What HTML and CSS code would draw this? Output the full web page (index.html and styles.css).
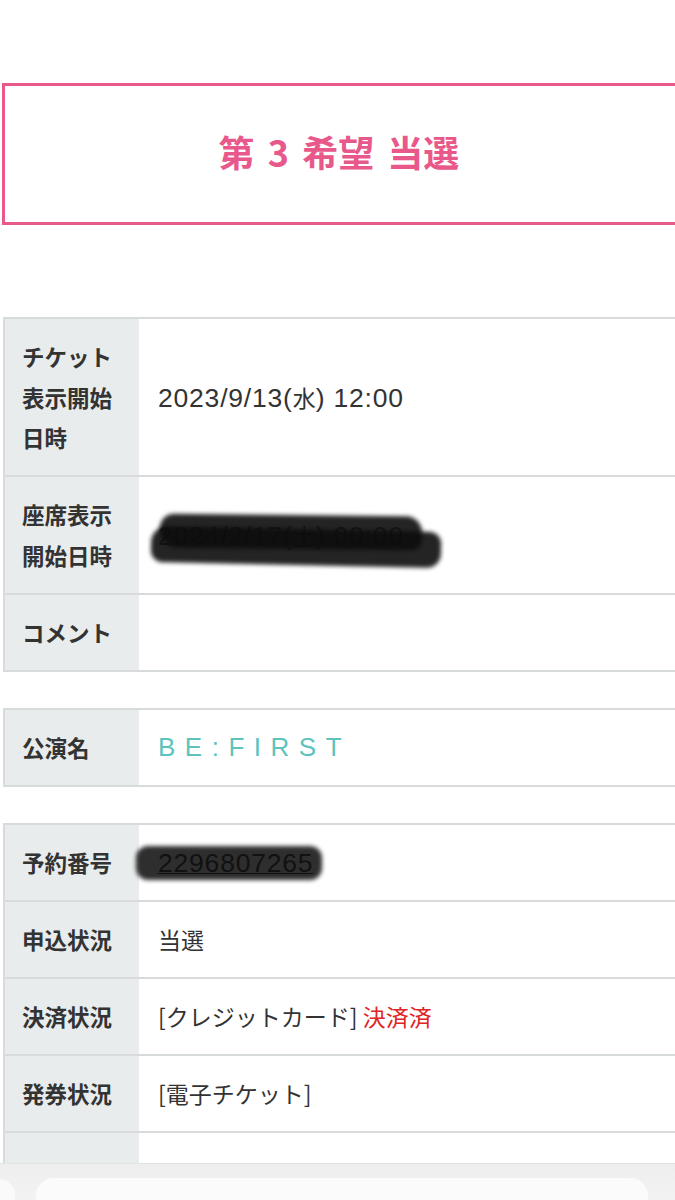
FILE: index.html
```html
<!DOCTYPE html>
<html lang="ja">
<head>
<meta charset="utf-8">
<title>当選</title>
<link rel="stylesheet" href="styles.css">
</head>
<body>
<div class="page">
  <div class="result"><span>第 3 希望 当選</span></div>

  <table class="info first">
    <tr>
      <th>チケット<br>表示開始<br>日時</th>
      <td><span class="lat">2023/9/13(</span>水<span class="lat">) 12:00</span></td>
    </tr>
    <tr>
      <th>座席表示<br>開始日時</th>
      <td><span class="redact seat"><span class="lat">2024/2/17(</span>土<span class="lat">) 00:00</span><i class="blob b1"></i><i class="blob b2"></i></span></td>
    </tr>
    <tr>
      <th>コメント</th>
      <td></td>
    </tr>
  </table>

  <table class="info">
    <tr>
      <th>公演名</th>
      <td class="artist">BE:FIRST</td>
    </tr>
  </table>

  <table class="info">
    <tr>
      <th>予約番号</th>
      <td><span class="redact"><u class="lat">2296807265</u><i class="blob b3"></i></span></td>
    </tr>
    <tr>
      <th>申込状況</th>
      <td>当選</td>
    </tr>
    <tr>
      <th>決済状況</th>
      <td>[クレジットカード] <span class="paid">決済済</span></td>
    </tr>
    <tr>
      <th>発券状況</th>
      <td>[電子チケット]</td>
    </tr>
    <tr>
      <th>&nbsp;</th>
      <td>&nbsp;</td>
    </tr>
  </table>
</div>

<div class="toolbar">
  <div class="tab-left"></div>
  <div class="address"></div>
</div>
</body>
</html>
```

FILE: styles.css
```css
html, body {
  margin: 0;
  padding: 0;
  background: #ffffff;
  overflow: hidden;
}

body {
  width: 675px;
  height: 1200px;
  font-family: "Noto Sans CJK JP", "Noto Sans", sans-serif;
  color: #333333;
  position: relative;
}

.page {
  padding: 83px 0 0 2px;
}

.result {
  height: 136px;
  margin-right: -20px;
  border: 3px solid #e9588a;
  display: flex;
  align-items: center;
  justify-content: center;
  padding-right: 20px;
}

.result span {
  color: #e9588a;
  font-size: 36px;
  font-weight: 700;
  word-spacing: 5px;
  margin-left: 1px;
  margin-top: -6px;
}

.info {
  border-collapse: collapse;
  width: 700px;
  margin-top: 36px;
  margin-left: 1px;
  border-left: 2px solid #d7dbdc;
}

.info.first {
  margin-top: 92px;
}

.info tr {
  border-top: 2px solid #d7dbdc;
  border-bottom: 2px solid #d7dbdc;
}

.info th {
  width: 117px;
  background: #e8ecec;
  text-align: left;
  vertical-align: middle;
  font-weight: 700;
  font-size: 22.5px;
  line-height: 40.5px;
  padding: 17.25px 0 17.25px 17px;
  color: #333333;
  white-space: nowrap;
}

.info td {
  font-size: 23px;
  line-height: 40.5px;
  padding: 17.25px 0 17.25px 19px;
  vertical-align: middle;
  color: #333333;
  font-weight: 400;
}

.lat {
  font-family: "Liberation Sans", "Noto Sans", sans-serif;
  font-size: 26.5px;
  line-height: 1;
  letter-spacing: 0.8px;
}

.artist {
  color: #5cc4bd !important;
  letter-spacing: 9.5px;
  font-family: "Liberation Sans", "Noto Sans", sans-serif;
  font-size: 26px !important;
}

.paid {
  color: #e02424;
}

.redact {
  position: relative;
  display: inline-block;
}

.seat {
  color: #555555;
}

.blob {
  position: absolute;
  display: block;
  background: rgba(12, 12, 12, 0.9);
  filter: blur(2px);
}

.b1 {
  left: 2px;
  top: 0px;
  width: 262px;
  height: 34px;
  border-radius: 14px 16px 10px 18px;
  transform: rotate(0.6deg);
}

.b2 {
  left: -7px;
  top: 14px;
  width: 290px;
  height: 36px;
  border-radius: 16px 12px 14px 12px;
  transform: rotate(1.2deg);
}

.b3 {
  left: -22px;
  top: 4px;
  width: 186px;
  height: 34px;
  border-radius: 12px;
  background: rgba(12, 12, 12, 0.86);
}

u.lat {
  text-decoration-thickness: 1px;
  text-underline-offset: 1px;
}

.toolbar {
  position: absolute;
  left: 0;
  right: 0;
  top: 1163px;
  height: 37px;
  background: linear-gradient(#eeeeee, #f3f3f3);
  border-top: 1px solid #e2e2e2;
}

.tab-left {
  position: absolute;
  left: -10px;
  top: 15px;
  width: 25px;
  height: 40px;
  background: #fafafa;
  border-radius: 0 16px 0 0;
}

.address {
  position: absolute;
  left: 36px;
  top: 14px;
  width: 612px;
  height: 50px;
  background: #fbfbfb;
  border-radius: 18px;
}
```
